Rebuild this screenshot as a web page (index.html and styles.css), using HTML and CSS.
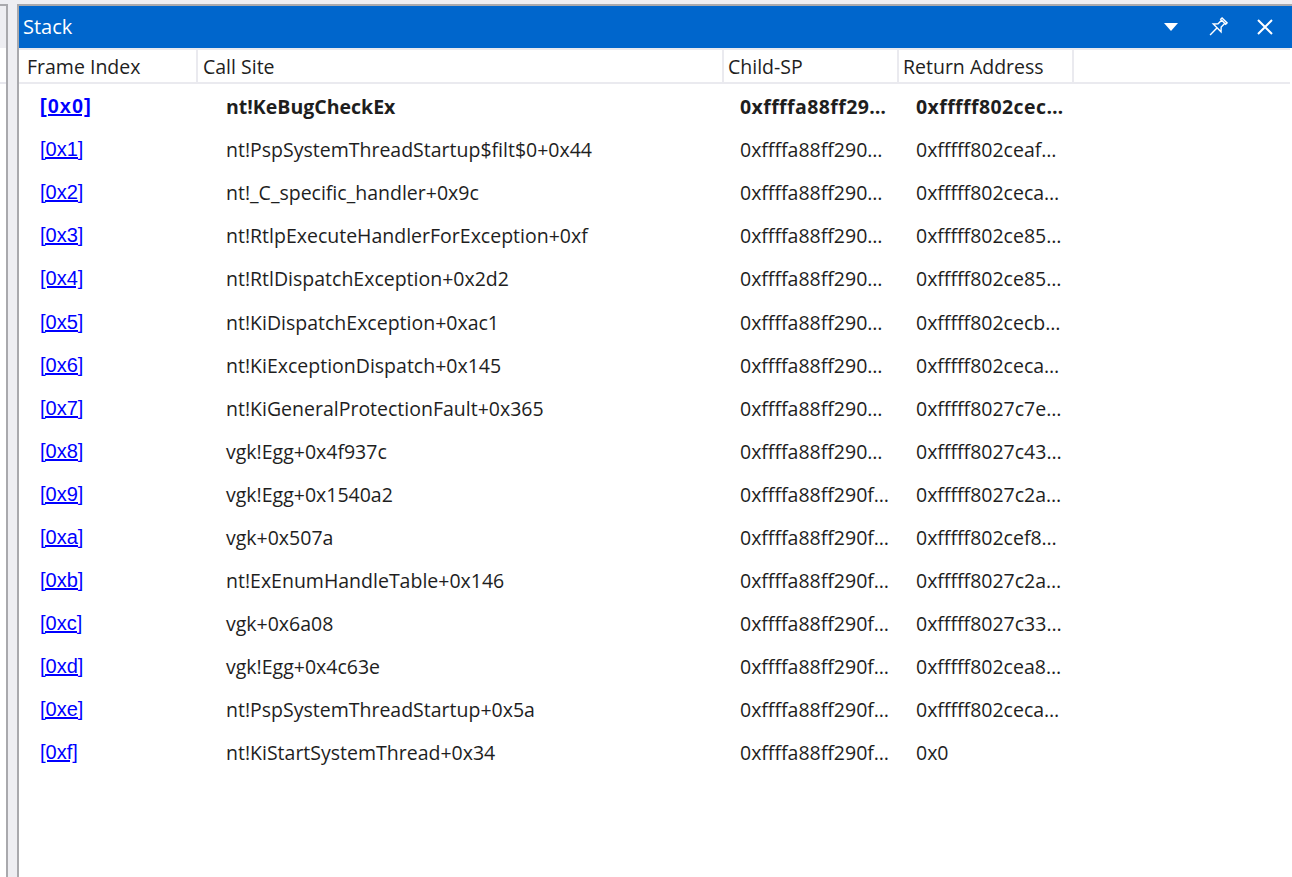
FILE: index.html
```html
<!DOCTYPE html>
<html lang="en">
<head>
<meta charset="utf-8">
<title>Stack</title>
<link rel="stylesheet" href="styles.css">
</head>
<body>
<div class="frame">
  <div class="side-panel">
    <div class="side-title"></div>
    <div class="side-header"></div>
    <div class="side-body"></div>
  </div>
  <div class="splitter"></div>
  <section class="panel">
    <header class="titlebar">
      <span class="title">Stack</span>
      <div class="title-tools">
        <svg class="ico-drop" width="14" height="8" viewBox="0 0 14 8"><path d="M0 0H14L7 8Z" fill="#fff"/></svg>
        <svg class="ico-pin" width="21" height="21" viewBox="-10.5 -10.5 21 21"><g transform="rotate(45)" fill="none" stroke="#fff" stroke-width="1.4" stroke-linejoin="miter"><path d="M-3.5 -10 H3.5 V-8 H-3.5 Z M-2.2 -8 V-3 L-5.5 0.5 H5.5 L2.2 -3 V-8"/><path d="M0 0.5 V10.5"/></g></svg>
        <svg class="ico-close" width="16" height="16" viewBox="0 0 16 16"><path d="M1 1L15 15M15 1L1 15" stroke="#fff" stroke-width="2"/></svg>
      </div>
    </header>
    <div class="grid-header">
      <div class="hcell">Frame Index</div>
      <div class="hcell">Call Site</div>
      <div class="hcell">Child-SP</div>
      <div class="hcell">Return Address</div>
      <div class="hcell hcell-rest"></div>
    </div>
    <div class="rows">
      <div class="row row-current"><a class="idx" href="#">[0x0]</a><span class="cell c2">nt!KeBugCheckEx</span><span class="cell c3">0xffffa88ff29…</span><span class="cell c4">0xfffff802cec…</span></div>
      <div class="row"><a class="idx" href="#">[0x1]</a><span class="cell c2">nt!PspSystemThreadStartup$filt$0+0x44</span><span class="cell c3">0xffffa88ff290…</span><span class="cell c4">0xfffff802ceaf…</span></div>
      <div class="row"><a class="idx" href="#">[0x2]</a><span class="cell c2">nt!_C_specific_handler+0x9c</span><span class="cell c3">0xffffa88ff290…</span><span class="cell c4">0xfffff802ceca…</span></div>
      <div class="row"><a class="idx" href="#">[0x3]</a><span class="cell c2">nt!RtlpExecuteHandlerForException+0xf</span><span class="cell c3">0xffffa88ff290…</span><span class="cell c4">0xfffff802ce85…</span></div>
      <div class="row"><a class="idx" href="#">[0x4]</a><span class="cell c2">nt!RtlDispatchException+0x2d2</span><span class="cell c3">0xffffa88ff290…</span><span class="cell c4">0xfffff802ce85…</span></div>
      <div class="row"><a class="idx" href="#">[0x5]</a><span class="cell c2">nt!KiDispatchException+0xac1</span><span class="cell c3">0xffffa88ff290…</span><span class="cell c4">0xfffff802cecb…</span></div>
      <div class="row"><a class="idx" href="#">[0x6]</a><span class="cell c2">nt!KiExceptionDispatch+0x145</span><span class="cell c3">0xffffa88ff290…</span><span class="cell c4">0xfffff802ceca…</span></div>
      <div class="row"><a class="idx" href="#">[0x7]</a><span class="cell c2">nt!KiGeneralProtectionFault+0x365</span><span class="cell c3">0xffffa88ff290…</span><span class="cell c4">0xfffff8027c7e…</span></div>
      <div class="row"><a class="idx" href="#">[0x8]</a><span class="cell c2">vgk!Egg+0x4f937c</span><span class="cell c3">0xffffa88ff290…</span><span class="cell c4">0xfffff8027c43…</span></div>
      <div class="row"><a class="idx" href="#">[0x9]</a><span class="cell c2">vgk!Egg+0x1540a2</span><span class="cell c3">0xffffa88ff290f…</span><span class="cell c4">0xfffff8027c2a…</span></div>
      <div class="row"><a class="idx" href="#">[0xa]</a><span class="cell c2">vgk+0x507a</span><span class="cell c3">0xffffa88ff290f…</span><span class="cell c4">0xfffff802cef8…</span></div>
      <div class="row"><a class="idx" href="#">[0xb]</a><span class="cell c2">nt!ExEnumHandleTable+0x146</span><span class="cell c3">0xffffa88ff290f…</span><span class="cell c4">0xfffff8027c2a…</span></div>
      <div class="row"><a class="idx" href="#">[0xc]</a><span class="cell c2">vgk+0x6a08</span><span class="cell c3">0xffffa88ff290f…</span><span class="cell c4">0xfffff8027c33…</span></div>
      <div class="row"><a class="idx" href="#">[0xd]</a><span class="cell c2">vgk!Egg+0x4c63e</span><span class="cell c3">0xffffa88ff290f…</span><span class="cell c4">0xfffff802cea8…</span></div>
      <div class="row"><a class="idx" href="#">[0xe]</a><span class="cell c2">nt!PspSystemThreadStartup+0x5a</span><span class="cell c3">0xffffa88ff290f…</span><span class="cell c4">0xfffff802ceca…</span></div>
      <div class="row"><a class="idx" href="#">[0xf]</a><span class="cell c2">nt!KiStartSystemThread+0x34</span><span class="cell c3">0xffffa88ff290f…</span><span class="cell c4">0x0</span></div>
    </div>
  </section>
</div>
</body>
</html>
```
FILE: styles.css
```css
* { box-sizing: border-box; }
html, body { margin: 0; padding: 0; height: 100%; }
body {
  background: #eeeef2;
  font-family: "Open Sans", "Noto Sans", sans-serif;
  color: #1e1e1e;
  overflow: hidden;
}
.frame {
  display: flex;
  height: 100%;
  padding-top: 4px;
}
.side-panel {
  width: 8px;
  border-right: 2px solid #a9a9ad;
  display: flex;
  flex-direction: column;
}
.side-title { height: 44px; background: #eeeef2; border-top: 2px solid #a9a9ad; }
.side-header { height: 36px; background: #fff; border-bottom: 2px solid #e8e8ee; }
.side-body { flex: 1; background: #fff; }
.splitter { width: 9px; }
.panel {
  flex: 1;
  display: flex;
  flex-direction: column;
  border-left: 2px solid #a9a9ad;
  border-top: 2px solid #a9a9ad;
  background: #fff;
  min-width: 0;
}
.titlebar {
  height: 42px;
  background: #0066cc;
  display: flex;
  align-items: center;
  justify-content: space-between;
  padding-left: 4px;
}
.title {
  color: #fff;
  font-size: 20px;
  line-height: 1;
}
.title-tools {
  display: flex;
  align-items: center;
  gap: 29px;
  padding-right: 19px;
}
.title-tools svg { display: block; }
.grid-header {
  display: grid;
  grid-template-columns: 179px 526px 175px 175px 1fr;
  height: 36px;
  border-top: 2px solid #eaeaef;
  border-bottom: 2px solid #eaeaef;
  margin-right: 2px;
}
.hcell {
  border-right: 2px solid #eaeaef;
  font-size: 19.5px;
  line-height: 32px;
  padding-top: 1px;
  white-space: nowrap;
  overflow: hidden;
}
.hcell:nth-child(1) { padding-left: 8px; }
.hcell:nth-child(2) { padding-left: 5px; }
.hcell:nth-child(3) { padding-left: 4px; }
.hcell:nth-child(4) { padding-left: 4px; }
.hcell-rest { border-right: none; }
.rows { flex: 1; padding-top: 1px; }
.row {
  display: grid;
  grid-template-columns: 179px 526px 175px 175px;
  height: 43.1px;
  align-items: center;
  font-size: 19.5px;
  white-space: nowrap;
}
.idx {
  padding-left: 21px;
  font-family: "Liberation Sans", Arial, sans-serif;
  font-size: 20px;
  color: #0000ff;
  text-decoration: underline;
  justify-self: start;
}
.cell { overflow: hidden; }
.c2 { padding-left: 28px; }
.c3 { padding-left: 16px; }
.c4 { padding-left: 17px; }
.row-current { font-weight: 700; }
.row-current .idx { font-weight: 700; letter-spacing: 1px; }
.row-current .c3, .row-current .c4 { letter-spacing: 0.4px; }
```
